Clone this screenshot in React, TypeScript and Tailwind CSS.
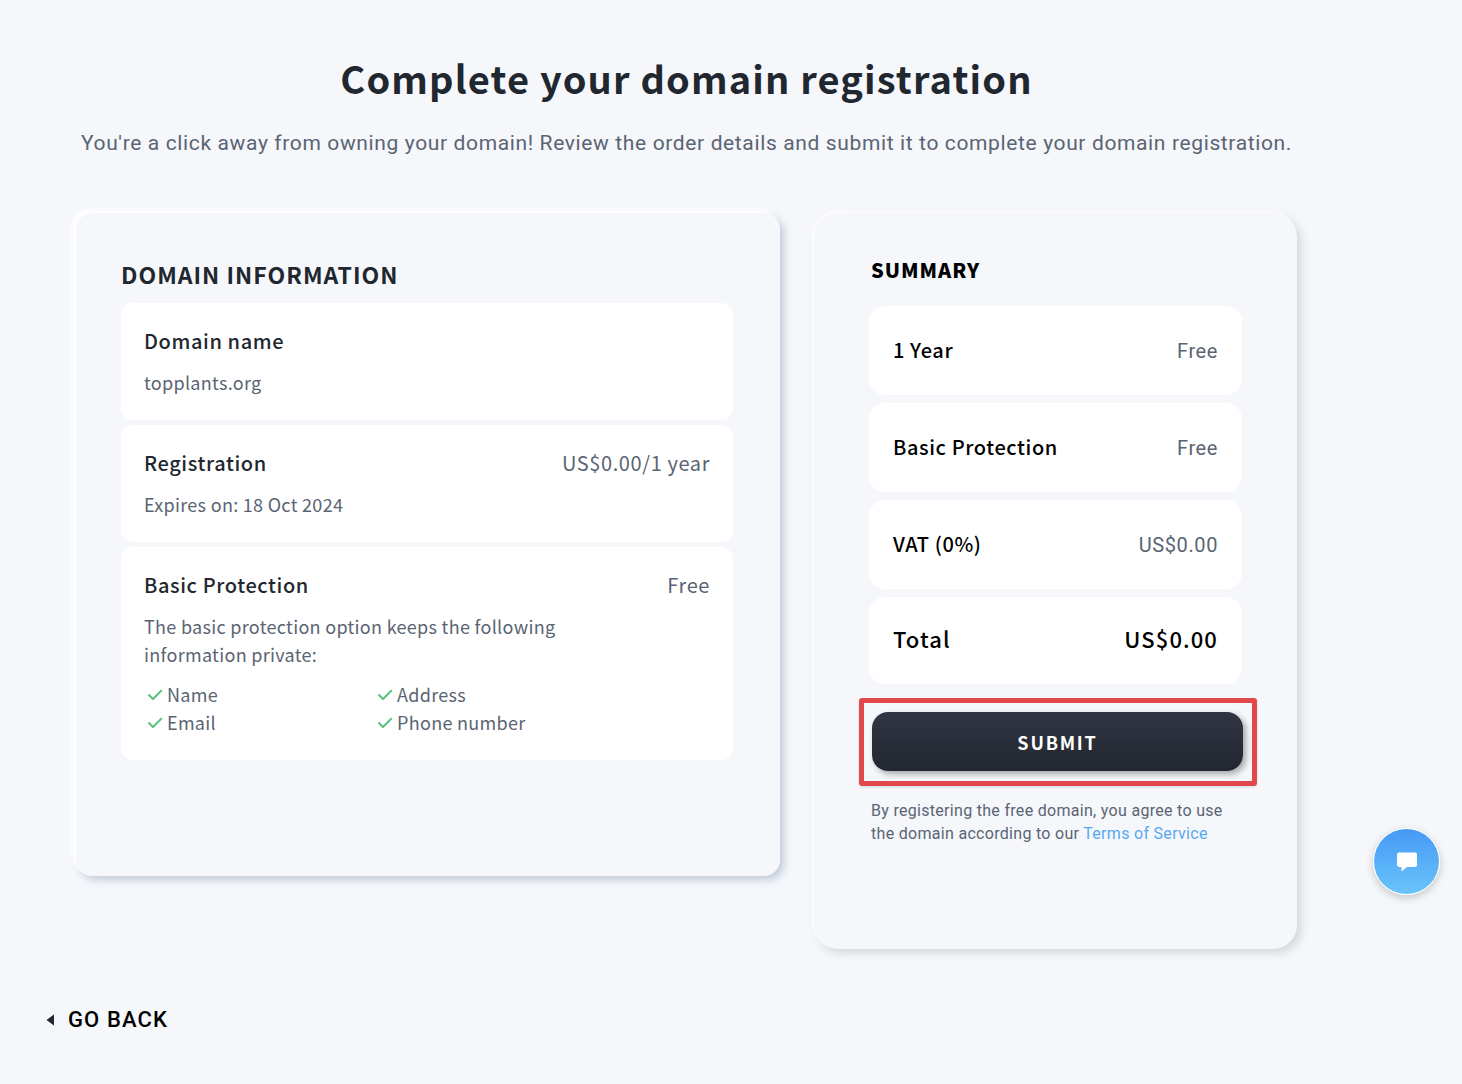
import { ReactNode } from "react";

const privateFields = ["Name", "Address", "Email", "Phone number"];

const summaryRows = [
  { label: "1 Year", value: "Free" },
  { label: "Basic Protection", value: "Free" },
  { label: "VAT (0%)", value: "US$0.00" }
];

function CheckIcon() {
  return (
    <svg
      viewBox="0 0 16 12"
      className="h-3 w-4 shrink-0"
      fill="none"
      stroke="#5cc27c"
      strokeWidth="2"
      strokeLinecap="round"
      strokeLinejoin="round"
      aria-hidden="true"
    >
      <path d="M2 7 6 11 14.200 2.800" />
    </svg>
  );
}

interface InfoCardProps {
  title: string;
  price?: string;
  children: ReactNode;
}

function InfoCard({ title, price, children }: InfoCardProps) {
  return (
    <section className="rounded-xl bg-white px-[23px] py-6 text-lg leading-[28px] tracking-[0.3px] text-[#5a6473]">
      <div className="mb-[13px] flex items-center justify-between text-xl leading-[28px] tracking-[0.03em]">
        <h3 className="font-medium text-[#21272f]">{title}</h3>
        {price && <span>{price}</span>}
      </div>
      {children}
    </section>
  );
}

export default function App() {
  return (
    <div className="min-h-screen bg-[#f5f7fb] font-['Noto_Sans_CJK_JP',sans-serif] text-black">
      <main className="pt-[50px] pr-[165px] pb-[50px] pl-[76px]">
        <header className="mb-[54px] text-center">
          <h1 className="text-[38px] leading-[56px] font-bold tracking-[0.03em] text-[#21272f]">
            Complete your domain registration
          </h1>
          <p className="-mx-4 mt-[21px] font-[Roboto,sans-serif] text-[21px] leading-[32px] tracking-[0.03em] text-[#5a6473]">
            You're a click away from owning your domain! Review the order details and submit it to
            complete your domain registration.
          </p>
        </header>

        <div className="grid grid-cols-[704fr_483fr] items-start gap-[34px]">
          <section className="rounded-2xl bg-[#f5f7fb] pt-[45px] pr-[47px] pb-[116px] pl-[45px] shadow-[-4px_-4px_4px_#ffffff,4px_4px_8px_#c3cbd8]">
            <h2 className="mb-[13px] text-[23px] leading-[32px] font-bold tracking-[1px] text-[#21272f]">
              DOMAIN INFORMATION
            </h2>
            <div className="flex flex-col gap-[5px]">
              <InfoCard title="Domain name">
                <p>topplants.org</p>
              </InfoCard>
              <InfoCard title="Registration" price="US$0.00/1 year">
                <p>Expires on: 18 Oct 2024</p>
              </InfoCard>
              <InfoCard title="Basic Protection" price="Free">
                <p className="max-w-[460px]">
                  The basic protection option keeps the following information private:
                </p>
                <ul className="mt-3 grid max-w-[460px] grid-cols-2">
                  {privateFields.map((field) => (
                    <li key={field} className="flex items-center gap-1 pl-[3px]">
                      <CheckIcon />
                      {field}
                    </li>
                  ))}
                </ul>
              </InfoCard>
            </div>
          </section>

          <aside className="rounded-3xl bg-[#f5f7fb] px-[55px] pt-[41px] pb-[104px] shadow-[-2px_-2px_3px_#fdfdfe,4px_4px_10px_#d3d5da]">
            <h2 className="mb-5 pl-[2px] text-xl leading-[32px] font-black tracking-wider">
              SUMMARY
            </h2>
            <dl className="flex flex-col gap-2">
              {summaryRows.map((row) => (
                <div
                  key={row.label}
                  className="flex h-[89px] items-center justify-between rounded-2xl bg-white px-6 text-xl tracking-[0.03em]"
                >
                  <dt className="pb-[2px] font-medium">{row.label}</dt>
                  <dd className="font-[Roboto,sans-serif] text-[#5a6473]">{row.value}</dd>
                </div>
              ))}
              <div className="flex h-[87px] items-center justify-between rounded-2xl bg-white px-6 pb-1 text-[22px] font-medium tracking-wider">
                <dt>Total</dt>
                <dd>US$0.00</dd>
              </div>
            </dl>

            <div className="mt-[14px] -mr-[15px] -ml-[10px] rounded-[3px] border-[5px] border-[#e2474c] pt-[9px] pr-[9px] pb-[10px] pl-2 shadow-[0_1px_3px_#0000001f]">
              <button
                type="submit"
                className="h-[59px] w-full rounded-2xl bg-linear-to-b from-[#323644] to-[#22262f] text-lg leading-[26px] font-bold tracking-widest text-white shadow-[3px_3px_6px_#00000055]"
              >
                SUBMIT
              </button>
            </div>

            <p className="mt-[13px] pl-[2px] font-[Roboto,sans-serif] text-base leading-[23px] tracking-[0.3px] text-[#5a6473]">
              By registering the free domain, you agree to use the domain according to our{" "}
              <a href="#terms" className="text-[#58a8ee]">
                Terms of Service
              </a>
            </p>
          </aside>
        </div>

        <a
          href="#back"
          className="mt-14 -ml-[30px] inline-flex items-center gap-[14px] font-[Roboto,sans-serif] text-[22px] leading-[30px] font-medium tracking-wider"
        >
          <svg viewBox="0 0 8 12" className="h-3 w-2" fill="#21272f" aria-hidden="true">
            <path d="M8 .5v11L.5 6z" />
          </svg>
          GO BACK
        </a>
      </main>

      <button
        type="button"
        aria-label="Open chat"
        className="fixed right-[22px] bottom-[189px] flex h-[67px] w-[67px] items-center justify-center rounded-full border border-white bg-linear-to-b from-[#4699f6] to-[#6ac4f8] shadow-[0_3px_8px_#00000033]"
      >
        <svg viewBox="0 0 22 20" className="h-5 w-[22px]" fill="#fff" aria-hidden="true">
          <path d="M3 .5h16a2 2 0 0 1 2 2V13a2 2 0 0 1-2 2h-8l-5.500 4.500V15H3a2 2 0 0 1-2-2V2.500a2 2 0 0 1 2-2z" />
        </svg>
      </button>
    </div>
  );
}
